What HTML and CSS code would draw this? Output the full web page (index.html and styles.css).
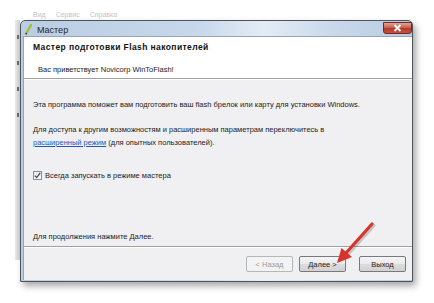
FILE: index.html
```html
<!DOCTYPE html>
<html lang="ru">
<head>
<meta charset="utf-8">
<link rel="stylesheet" href="styles.css">
</head>
<body>
<div class="desk">
  <div class="bg-menu"><span>Вид</span><span>Сервис</span><span>Справка</span></div>
  <div class="desk-row">
    <div class="bg-strip"><i></i><i></i><i></i><i></i></div>
    <div class="window">
      <div class="titlebar">
        <svg class="app-icon" width="7" height="11" viewBox="0 0 7 11">
          <path d="M6 1 L1.5 9" stroke="#9fbf2a" stroke-width="2.2" stroke-linecap="round"/>
          <path d="M1.5 9 L0.8 10.4" stroke="#3a3a2a" stroke-width="1.6"/>
        </svg>
        <span class="title">Мастер</span>
        <div class="close">
          <svg width="9" height="8" viewBox="0 0 9 8"><path d="M1.5 1 L7.5 7 M7.5 1 L1.5 7" stroke="#fff" stroke-width="1.8"/></svg>
        </div>
      </div>
      <div class="client">
        <div class="header">
          <div class="h-title">Мастер подготовки Flash накопителей</div>
          <div class="h-sub">Вас приветствует Novicorp WinToFlash!</div>
        </div>
        <div class="body">
          <p class="p1">Эта программа поможет вам подготовить ваш flash брелок или карту для установки Windows.</p>
          <p class="p2">Для доступа к другим возможностям и расширенным параметрам переключитесь в<br><a class="link">расширенный режим</a> (для опытных пользователей).</p>
          <div class="check">
            <span class="box"><svg width="7" height="7" viewBox="0 0 7 7"><path d="M0.8 3.6 L2.7 5.6 L6.2 0.9" fill="none" stroke="#3b4a5c" stroke-width="1.3"/></svg></span>
            <span>Всегда запускать в режиме мастера</span>
          </div>
          <p class="continue">Для продолжения нажмите Далее.</p>
        </div>
        <div class="footer">
          <button class="btn disabled">&lt; Назад</button>
          <button class="btn">Далее &gt;</button>
          <button class="btn exit">Выход</button>
        </div>
      </div>
    </div>
  </div>
  <svg class="arrow" width="434" height="303" viewBox="0 0 434 303">
    <path d="M372 224 L346 253" stroke="rgba(0,0,0,0.18)" stroke-width="4" stroke-linecap="round" transform="translate(1.5 1.5)"/>
    <path d="M372 224 L346 253" stroke="#d8342c" stroke-width="3.2" stroke-linecap="round"/>
    <polygon points="337,263 341.5,248 352,257" fill="#d8342c"/>
  </svg>
</div>
</body>
</html>
```
FILE: styles.css
```css
html, body {
  margin: 0;
  padding: 0;
  background: #ffffff;
}
body {
  width: 434px;
  height: 303px;
  overflow: hidden;
  font-family: "Liberation Sans", Arial, sans-serif;
  font-size: 7.5px;
  color: #1b1b1b;
}
.desk {
  position: relative;
  width: 434px;
  height: 303px;
}
.bg-menu {
  height: 20px;
  box-sizing: border-box;
  padding: 11px 0 0 33px;
  line-height: 8px;
  color: #c4c4c4;
  font-size: 7px;
  display: flex;
  gap: 10px;
}
.desk-row {
  display: flex;
  align-items: flex-start;
}
.bg-strip {
  width: 5px;
  height: 240px;
  margin-left: 15px;
  background: linear-gradient(to right, #e8e8e8, #d3d3d3);
  display: flex;
  flex-direction: column;
  align-items: center;
  padding-top: 15px;
  box-sizing: border-box;
  gap: 22px;
}
.bg-strip i {
  display: block;
  width: 2px;
  height: 4px;
  background: #6d6d6d;
}
.window {
  width: 393px;
  height: 262px;
  box-sizing: border-box;
  border: 1px solid #50555c;
  border-radius: 5px 5px 0 0;
  background: linear-gradient(to right, #b9cde3, #c7d8ea 45%, #e3ecf6 62%, #c9d9ea 80%, #b7cbe1);
  padding: 0 0 1px 2px;
  box-shadow: 3px 4px 7px rgba(0, 0, 0, 0.35);
  display: flex;
  flex-direction: column;
}
.titlebar {
  height: 15px;
  display: flex;
  align-items: center;
  padding-left: 2px;
}
.app-icon {
  display: block;
  margin-top: 1px;
}
.title {
  margin-left: 5px;
  font-size: 9px;
  color: #1e1e1e;
  margin-top: 2px;
}
.close {
  margin-left: auto;
  align-self: flex-start;
  margin-top: 1px;
  width: 29px;
  height: 12px;
  box-sizing: border-box;
  border: 1px solid #6b2a22;
  border-radius: 0 0 3px 3px;
  background: linear-gradient(to bottom, #e0a597, #c9604f 45%, #b83a2a 55%, #c5513e);
  display: flex;
  align-items: center;
  justify-content: center;
}
.close svg { display: block; }
.client {
  flex: 1;
  display: flex;
  flex-direction: column;
  background: #f0f0f2;
  border-left: 1px solid #98a4b2;
  border-top: 1px solid #98a4b2;
}
.header {
  height: 42px;
  box-sizing: border-box;
  background: #ffffff;
  padding: 5px 0 0 9px;
  border-bottom: 1px solid #a0a0a0;
}
.h-title {
  font-weight: bold;
  font-size: 8.5px;
  letter-spacing: 0.4px;
  line-height: 11px;
  color: #111;
}
.h-sub {
  margin-top: 11px;
  margin-left: 5px;
  line-height: 11px;
}
.body {
  height: 168px;
  box-sizing: border-box;
  padding: 18px 9px 3px 9px;
  display: flex;
  flex-direction: column;
  border-top: 1px solid #ffffff;
  border-bottom: 1px solid #a0a0a0;
}
.body p {
  margin: 0;
  line-height: 13px;
}
.p2 {
  margin-top: 12px !important;
}
.link {
  color: #1f58b3;
  text-decoration: underline;
}
.check {
  margin-top: 20px;
  display: flex;
  align-items: center;
  gap: 3px;
  line-height: 13px;
}
.box {
  width: 9px;
  height: 9px;
  box-sizing: border-box;
  border: 1px solid #8a8d91;
  background: linear-gradient(to bottom, #e9eaec, #fafafa);
  display: flex;
  align-items: center;
  justify-content: center;
}
.box svg { display: block; }
.continue {
  margin-top: auto !important;
}
.footer {
  flex: 1;
  border-top: 1px solid #ffffff;
  display: flex;
  justify-content: flex-end;
  align-items: flex-start;
  padding: 8px 6px 0 0;
}
.btn {
  width: 47px;
  height: 16px;
  box-sizing: border-box;
  margin: 0;
  padding: 0;
  font-family: "Liberation Sans", Arial, sans-serif;
  font-size: 7.5px;
  color: #1b1b1b;
  border: 1px solid #767a80;
  border-radius: 2px;
  background: linear-gradient(to bottom, #f5f5f5, #eaeaea 48%, #dcdcdc 52%, #d2d2d2);
  margin-left: 6px;
}
.btn.disabled {
  color: #9a9a9a;
  border-color: #b3b7bb;
  background: #f3f3f3;
}
.btn.exit {
  margin-left: 13px;
}
.arrow {
  position: absolute;
  left: 0;
  top: 0;
  pointer-events: none;
}
```
